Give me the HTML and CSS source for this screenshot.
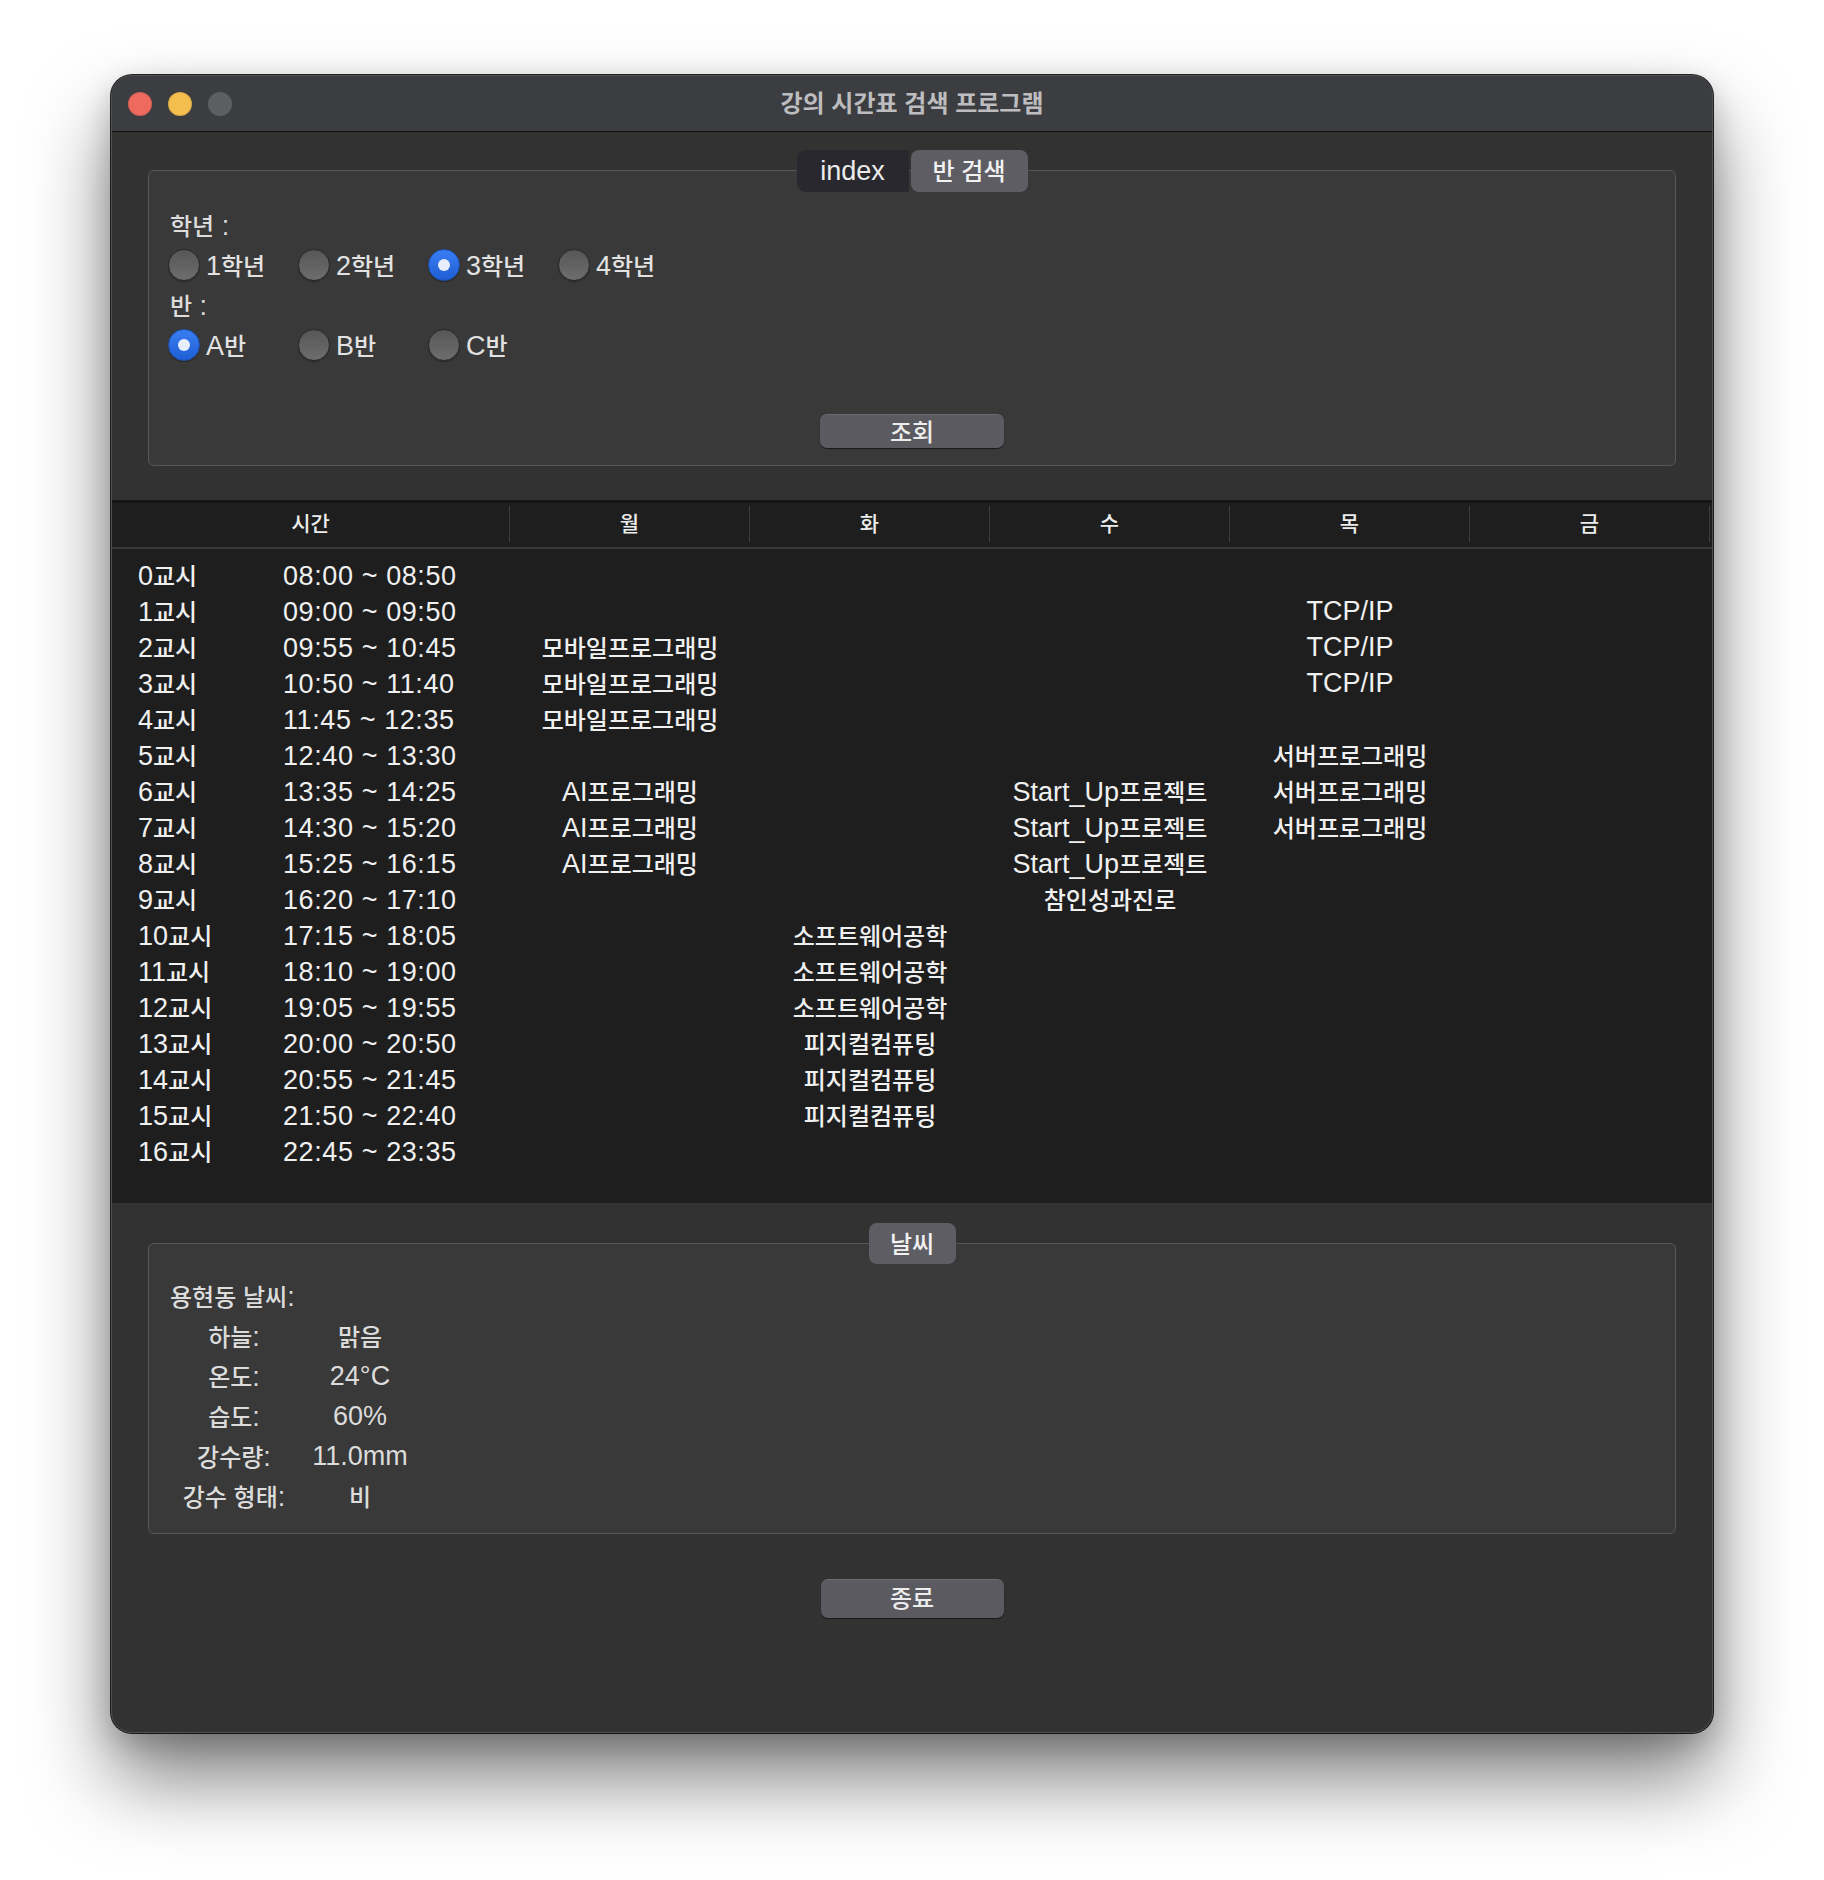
FILE: index.html
```html
<!DOCTYPE html>
<html lang="ko">
<head>
<meta charset="utf-8">
<title>강의 시간표 검색 프로그램</title>
<link rel="stylesheet" href="styles.css">
</head>
<body>
<div class="window">
  <div class="titlebar">
    <div class="lights"><span class="light red"></span><span class="light yellow"></span><span class="light gray"></span></div>
    <div class="title">강의 시간표 검색 프로그램</div>
    <div></div>
  </div>
  <div class="content">
    <div class="tabs">
      <div class="seg">index</div>
      <div class="seg on"><span class="k">반 검색</span></div>
    </div>
    <div class="group search">
      <div class="field-label"><span class="k">학년</span> :</div>
      <div class="radios">
        <div class="radio"><span class="dot"></span><span>1<span class="k">학년</span></span></div>
        <div class="radio"><span class="dot"></span><span>2<span class="k">학년</span></span></div>
        <div class="radio on"><span class="dot"></span><span>3<span class="k">학년</span></span></div>
        <div class="radio"><span class="dot"></span><span>4<span class="k">학년</span></span></div>
      </div>
      <div class="field-label"><span class="k">반</span> :</div>
      <div class="radios">
        <div class="radio on"><span class="dot"></span><span>A<span class="k">반</span></span></div>
        <div class="radio"><span class="dot"></span><span>B<span class="k">반</span></span></div>
        <div class="radio"><span class="dot"></span><span>C<span class="k">반</span></span></div>
      </div>
      <div class="btn btn-search"><span class="k">조회</span></div>
    </div>

    <div class="table">
      <div class="thead">
        <div class="th">시간</div>
        <div class="th">월</div>
        <div class="th">화</div>
        <div class="th">수</div>
        <div class="th">목</div>
        <div class="th">금</div>
      </div>
      <div class="tbody">
        <div class="tr"><div class="tt"><span class="period">0<span class="k">교시</span></span><span class="time">08:00 ~ 08:50</span></div><div class="td"></div><div class="td"></div><div class="td"></div><div class="td"></div><div class="td"></div></div>
        <div class="tr"><div class="tt"><span class="period">1<span class="k">교시</span></span><span class="time">09:00 ~ 09:50</span></div><div class="td"></div><div class="td"></div><div class="td"></div><div class="td">TCP/IP</div><div class="td"></div></div>
        <div class="tr"><div class="tt"><span class="period">2<span class="k">교시</span></span><span class="time">09:55 ~ 10:45</span></div><div class="td"><span class="k">모바일프로그래밍</span></div><div class="td"></div><div class="td"></div><div class="td">TCP/IP</div><div class="td"></div></div>
        <div class="tr"><div class="tt"><span class="period">3<span class="k">교시</span></span><span class="time">10:50 ~ 11:40</span></div><div class="td"><span class="k">모바일프로그래밍</span></div><div class="td"></div><div class="td"></div><div class="td">TCP/IP</div><div class="td"></div></div>
        <div class="tr"><div class="tt"><span class="period">4<span class="k">교시</span></span><span class="time">11:45 ~ 12:35</span></div><div class="td"><span class="k">모바일프로그래밍</span></div><div class="td"></div><div class="td"></div><div class="td"></div><div class="td"></div></div>
        <div class="tr"><div class="tt"><span class="period">5<span class="k">교시</span></span><span class="time">12:40 ~ 13:30</span></div><div class="td"></div><div class="td"></div><div class="td"></div><div class="td"><span class="k">서버프로그래밍</span></div><div class="td"></div></div>
        <div class="tr"><div class="tt"><span class="period">6<span class="k">교시</span></span><span class="time">13:35 ~ 14:25</span></div><div class="td">AI<span class="k">프로그래밍</span></div><div class="td"></div><div class="td">Start_Up<span class="k">프로젝트</span></div><div class="td"><span class="k">서버프로그래밍</span></div><div class="td"></div></div>
        <div class="tr"><div class="tt"><span class="period">7<span class="k">교시</span></span><span class="time">14:30 ~ 15:20</span></div><div class="td">AI<span class="k">프로그래밍</span></div><div class="td"></div><div class="td">Start_Up<span class="k">프로젝트</span></div><div class="td"><span class="k">서버프로그래밍</span></div><div class="td"></div></div>
        <div class="tr"><div class="tt"><span class="period">8<span class="k">교시</span></span><span class="time">15:25 ~ 16:15</span></div><div class="td">AI<span class="k">프로그래밍</span></div><div class="td"></div><div class="td">Start_Up<span class="k">프로젝트</span></div><div class="td"></div><div class="td"></div></div>
        <div class="tr"><div class="tt"><span class="period">9<span class="k">교시</span></span><span class="time">16:20 ~ 17:10</span></div><div class="td"></div><div class="td"></div><div class="td"><span class="k">참인성과진로</span></div><div class="td"></div><div class="td"></div></div>
        <div class="tr"><div class="tt"><span class="period">10<span class="k">교시</span></span><span class="time">17:15 ~ 18:05</span></div><div class="td"></div><div class="td"><span class="k">소프트웨어공학</span></div><div class="td"></div><div class="td"></div><div class="td"></div></div>
        <div class="tr"><div class="tt"><span class="period">11<span class="k">교시</span></span><span class="time">18:10 ~ 19:00</span></div><div class="td"></div><div class="td"><span class="k">소프트웨어공학</span></div><div class="td"></div><div class="td"></div><div class="td"></div></div>
        <div class="tr"><div class="tt"><span class="period">12<span class="k">교시</span></span><span class="time">19:05 ~ 19:55</span></div><div class="td"></div><div class="td"><span class="k">소프트웨어공학</span></div><div class="td"></div><div class="td"></div><div class="td"></div></div>
        <div class="tr"><div class="tt"><span class="period">13<span class="k">교시</span></span><span class="time">20:00 ~ 20:50</span></div><div class="td"></div><div class="td"><span class="k">피지컬컴퓨팅</span></div><div class="td"></div><div class="td"></div><div class="td"></div></div>
        <div class="tr"><div class="tt"><span class="period">14<span class="k">교시</span></span><span class="time">20:55 ~ 21:45</span></div><div class="td"></div><div class="td"><span class="k">피지컬컴퓨팅</span></div><div class="td"></div><div class="td"></div><div class="td"></div></div>
        <div class="tr"><div class="tt"><span class="period">15<span class="k">교시</span></span><span class="time">21:50 ~ 22:40</span></div><div class="td"></div><div class="td"><span class="k">피지컬컴퓨팅</span></div><div class="td"></div><div class="td"></div><div class="td"></div></div>
        <div class="tr"><div class="tt"><span class="period">16<span class="k">교시</span></span><span class="time">22:45 ~ 23:35</span></div><div class="td"></div><div class="td"></div><div class="td"></div><div class="td"></div><div class="td"></div></div>
      </div>
    </div>

    <div class="tabs weather-tabs">
      <div class="seg on single"><span class="k">날씨</span></div>
    </div>
    <div class="group weather">
      <div class="w-title"><span class="k">용현동 날씨</span>:</div>
      <div class="w-key"><span class="k">하늘</span>:</div><div class="w-val"><span class="k">맑음</span></div>
      <div class="w-key"><span class="k">온도</span>:</div><div class="w-val">24°C</div>
      <div class="w-key"><span class="k">습도</span>:</div><div class="w-val">60%</div>
      <div class="w-key"><span class="k">강수량</span>:</div><div class="w-val">11.0mm</div>
      <div class="w-key"><span class="k">강수 형태</span>:</div><div class="w-val"><span class="k">비</span></div>
    </div>

    <div class="btn btn-exit"><span class="k">종료</span></div>
  </div>
</div>
</body>
</html>
```

FILE: styles.css
```css
* { box-sizing: border-box; }

html, body {
  margin: 0;
  padding: 0;
}

body {
  width: 1824px;
  height: 1880px;
  overflow: hidden;
  background: #ffffff;
  padding: 75px 0 0 111px;
  font-family: "Liberation Sans", "Noto Sans CJK KR", sans-serif;
  font-size: 27px;
  color: #e4e4e4;
}

.k {
  font-family: "Noto Sans CJK KR", sans-serif;
  font-size: 24px;
  font-weight: 500;
}

.window {
  width: 1602px;
  height: 1658px;
  background: #323232;
  border: 1px solid #505050;
  border-radius: 21px;
  box-shadow: 0 0 0 1px rgba(0, 0, 0, 0.85), 0 46px 80px rgba(0, 0, 0, 0.5), 0 10px 30px rgba(0, 0, 0, 0.2);
  overflow: hidden;
  display: flex;
  flex-direction: column;
}

/* title bar */
.titlebar {
  height: 56px;
  flex: none;
  background: #3c3d41;
  border-bottom: 1px solid #0f0f10;
  display: grid;
  grid-template-columns: 1fr auto 1fr;
  align-items: center;
}

.lights {
  display: flex;
  gap: 16px;
  padding-left: 16px;
}

.light {
  width: 24px;
  height: 24px;
  border-radius: 50%;
  display: block;
}

.light.red { background: #ee6a5f; box-shadow: inset 0 0 0 1px rgba(0,0,0,0.12); }
.light.yellow { background: #f5bf4f; box-shadow: inset 0 0 0 1px rgba(0,0,0,0.12); }
.light.gray { background: #5d5e62; }

.title {
  font-family: "Noto Sans CJK KR", sans-serif;
  font-weight: 700;
  font-size: 24px;
  color: #bdbdbf;
  line-height: 50px;
  padding-bottom: 4px;
}

/* content */
.content {
  flex: 1;
  display: flex;
  flex-direction: column;
  padding-top: 18px;
}

.tabs {
  display: flex;
  justify-content: center;
  position: relative;
  z-index: 1;
  height: 42px;
  flex: none;
}

.tabs > .seg:first-child:not(.single) {
  background: #29282e;
  border-radius: 9px 0 0 9px;
}

.seg {
  height: 42px;
  display: flex;
  align-items: center;
  justify-content: center;
  color: #ececec;
}

.seg:first-child {
  width: 112px;
}

.seg.on {
  width: 117px;
  background: #5e5d63;
  border-radius: 8px;
  margin-left: 2px;
  color: #f2f2f2;
  padding-bottom: 3px;
}

.seg.single {
  width: 87px;
  margin-left: 0;
  height: 41px;
}

.weather-tabs {
  margin-top: 20px;
  height: 41px;
}

.group {
  margin: -22px 36px 0;
  border: 1px solid #575757;
  border-radius: 6px;
  background: #393939;
  flex: none;
}

/* search group */
.search {
  padding: 34px 19px 17px;
}

.field-label {
  height: 40px;
  line-height: 40px;
  padding-left: 2px;
  color: #dcdcdc;
}

.radios {
  height: 40px;
  display: flex;
  align-items: center;
}

.radio {
  width: 130px;
  display: flex;
  align-items: center;
  gap: 6px;
  color: #e2e2e2;
  line-height: 40px;
  white-space: nowrap;
}

.dot {
  width: 32px;
  height: 32px;
  border-radius: 50%;
  flex: none;
  background: linear-gradient(#575757, #6d6d6d);
  border: 1px solid #2a2a2a;
  box-shadow: 0 1px 1px rgba(0, 0, 0, 0.35);
  display: flex;
  align-items: center;
  justify-content: center;
}

.radio.on .dot {
  background: linear-gradient(#3a7df2, #1f5ed4);
  border-color: #1c4fb0;
}

.radio.on .dot::after {
  content: "";
  width: 12px;
  height: 12px;
  border-radius: 50%;
  background: #e8eefb;
}

.btn {
  width: 184px;
  height: 34px;
  margin: 49px auto 0;
  border-radius: 7px;
  background: #5b5a61;
  border-top: 1px solid #6c6b71;
  box-shadow: 0 1px 1px rgba(0, 0, 0, 0.55);
  display: flex;
  align-items: center;
  justify-content: center;
  color: #ececec;
  flex: none;
  padding-bottom: 2px;
}

/* timetable */
.table {
  margin-top: 34px;
  background: #1e1e1e;
  border-top: 3px solid #161616;
  flex: none;
}

.thead {
  height: 46px;
  border-bottom: 2px solid #3a3a3a;
  display: grid;
  grid-template-columns: 398px repeat(5, 240px);
}

.th {
  margin-top: 3px;
  height: 36px;
  border-right: 1px solid #3b3b3b;
  display: flex;
  align-items: center;
  justify-content: center;
  font-family: "Noto Sans CJK KR", sans-serif;
  font-size: 21px;
  font-weight: 500;
  color: #ececec;
  padding-bottom: 5px;
}

.tbody {
  padding: 8px 0 34px;
}

.tr {
  height: 36px;
  line-height: 36px;
  display: grid;
  grid-template-columns: 398px repeat(5, 240px);
  color: #f0f0f0;
}

.tt {
  padding-left: 26px;
  white-space: nowrap;
}

.period {
  display: inline-block;
  width: 145px;
}

.time {
  letter-spacing: 0.6px;
}

.td {
  text-align: center;
  white-space: nowrap;
}

/* weather */
.weather {
  margin-top: -21px;
  padding: 32px 21px 17px;
  display: grid;
  grid-template-columns: 128px 124px;
  grid-auto-rows: 40px;
  line-height: 40px;
  color: #dcdcdc;
}

.w-title {
  grid-column: 1 / -1;
}

.w-key, .w-val {
  text-align: center;
  white-space: nowrap;
}

.btn-exit {
  width: 183px;
  height: 39px;
  margin-top: 45px;
  padding-bottom: 5px;
}
```
